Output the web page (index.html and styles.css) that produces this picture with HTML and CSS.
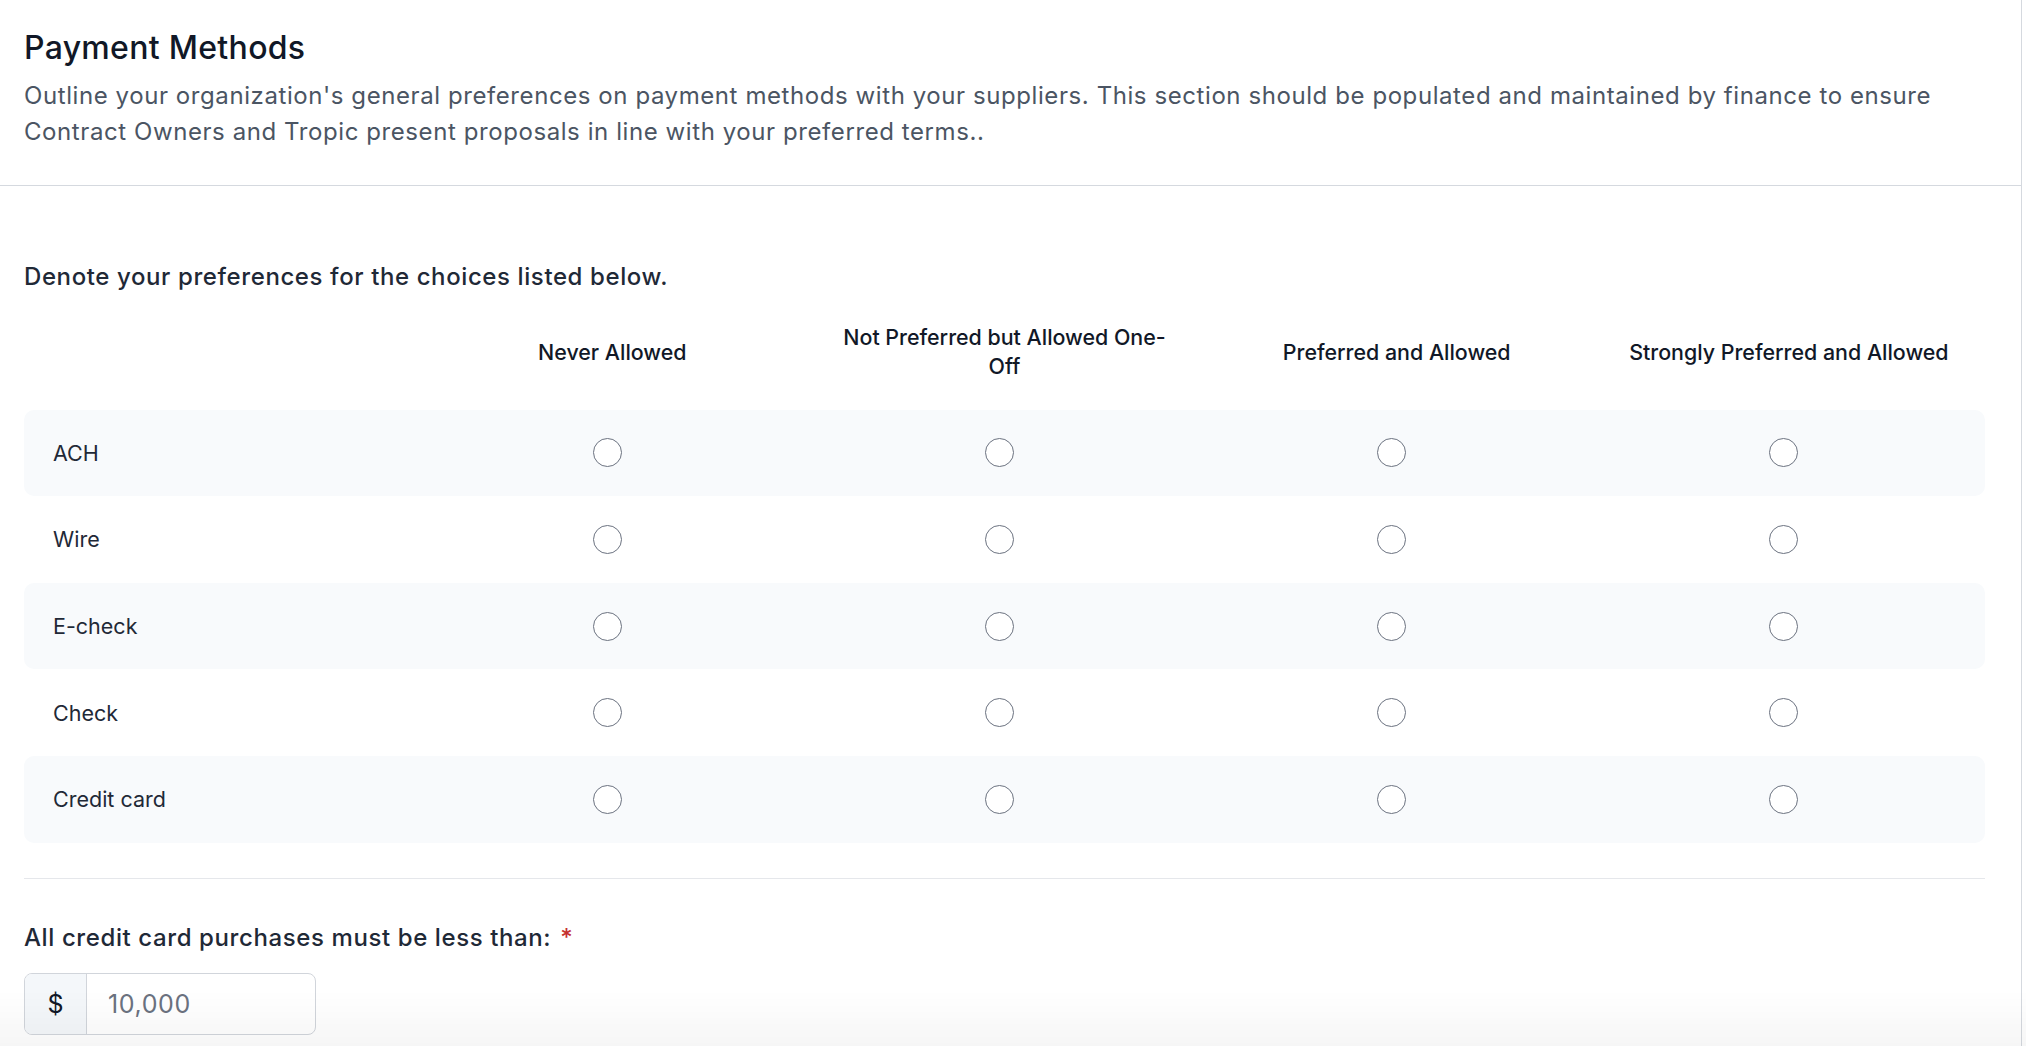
FILE: index.html
```html
<!DOCTYPE html>
<html lang="en">
<head>
<meta charset="utf-8">
<title>Payment Methods</title>
<link rel="stylesheet" href="styles.css">
</head>
<body>
<div class="panel">
  <header class="intro">
    <h1 class="title">Payment Methods</h1>
    <p class="desc">Outline your organization's general preferences on payment methods with your suppliers. This section should be populated and maintained by finance to ensure Contract Owners and Tropic present proposals in line with your preferred terms..</p>
  </header>
  <section class="content">
    <p class="prompt">Denote your preferences for the choices listed below.</p>
    <div class="matrix">
      <div class="mrow mhead">
        <div class="cell"></div>
        <div class="cell colhead">Never Allowed</div>
        <div class="cell colhead">Not Preferred but Allowed One-Off</div>
        <div class="cell colhead">Preferred and Allowed</div>
        <div class="cell colhead">Strongly Preferred and Allowed</div>
      </div>
      <div class="mrow shaded">
        <div class="cell rlabel">ACH</div>
        <div class="cell"><input class="radio" type="radio" name="ach"></div>
        <div class="cell"><input class="radio" type="radio" name="ach"></div>
        <div class="cell"><input class="radio" type="radio" name="ach"></div>
        <div class="cell"><input class="radio" type="radio" name="ach"></div>
      </div>
      <div class="mrow">
        <div class="cell rlabel">Wire</div>
        <div class="cell"><input class="radio" type="radio" name="wire"></div>
        <div class="cell"><input class="radio" type="radio" name="wire"></div>
        <div class="cell"><input class="radio" type="radio" name="wire"></div>
        <div class="cell"><input class="radio" type="radio" name="wire"></div>
      </div>
      <div class="mrow shaded">
        <div class="cell rlabel">E-check</div>
        <div class="cell"><input class="radio" type="radio" name="echeck"></div>
        <div class="cell"><input class="radio" type="radio" name="echeck"></div>
        <div class="cell"><input class="radio" type="radio" name="echeck"></div>
        <div class="cell"><input class="radio" type="radio" name="echeck"></div>
      </div>
      <div class="mrow">
        <div class="cell rlabel">Check</div>
        <div class="cell"><input class="radio" type="radio" name="check"></div>
        <div class="cell"><input class="radio" type="radio" name="check"></div>
        <div class="cell"><input class="radio" type="radio" name="check"></div>
        <div class="cell"><input class="radio" type="radio" name="check"></div>
      </div>
      <div class="mrow shaded">
        <div class="cell rlabel">Credit card</div>
        <div class="cell"><input class="radio" type="radio" name="cc"></div>
        <div class="cell"><input class="radio" type="radio" name="cc"></div>
        <div class="cell"><input class="radio" type="radio" name="cc"></div>
        <div class="cell"><input class="radio" type="radio" name="cc"></div>
      </div>
    </div>
    <hr class="divider">
    <label class="field-label" for="limit">All credit card purchases must be less than: <span class="req">*</span></label>
    <div class="money">
      <span class="prefix">$</span>
      <input id="limit" class="amount" type="text" placeholder="10,000">
    </div>
  </section>
</div>
<div class="fade"></div>
</body>
</html>
```

FILE: styles.css
```css
html, body {
  margin: 0;
  padding: 0;
  background: #ffffff;
}

body {
  font-family: Inter, "Noto Sans", "Liberation Sans", sans-serif;
  color: #1f2937;
  overflow: hidden;
}

.panel {
  width: 2022px;
  border-right: 1px solid #d5d9df;
  min-height: 1046px;
  box-sizing: border-box;
}

.intro {
  padding: 28px 40px 35px 24px;
  border-bottom: 1px solid #d5d9df;
}

.title {
  margin: 0;
  font-size: 32px;
  line-height: 40px;
  font-weight: 500;
  letter-spacing: 0.3px;
  color: #111827;
}

.desc {
  margin: 10px 0 0;
  font-size: 24px;
  line-height: 36px;
  font-weight: 400;
  letter-spacing: 0.58px;
  color: #4b5563;
}

.content {
  padding: 75px 36px 0 24px;
}

.prompt {
  margin: 0;
  font-size: 24px;
  line-height: 32px;
  font-weight: 500;
  letter-spacing: 0.6px;
  color: #1f2937;
}

.matrix {
  margin-top: 16px;
  display: flex;
  flex-direction: column;
}

.mrow {
  display: grid;
  grid-template-columns: repeat(5, 1fr);
  height: 86.6px;
  border-radius: 10px;
}

.mhead {
  margin-bottom: 14px;
}

.shaded {
  background: #f8fafc;
}

.cell {
  display: flex;
  align-items: center;
  justify-content: center;
}

.colhead {
  padding: 0 24px;
  text-align: center;
  font-size: 21.4px;
  line-height: 29px;
  font-weight: 500;
  color: #111827;
}

.rlabel {
  justify-content: flex-start;
  padding-left: 29px;
  font-size: 21.5px;
  font-weight: 400;
  color: #1f2937;
}

.radio {
  appearance: none;
  -webkit-appearance: none;
  width: 29px;
  height: 29px;
  margin: 0 10px 0 0;
  border: 1.3px solid #6b7280;
  border-radius: 50%;
  background: #ffffff;
  box-sizing: border-box;
}

.divider {
  margin: 35px 0 0;
  border: 0;
  border-top: 1.5px solid #e5e7eb;
}

.field-label {
  display: block;
  margin-top: 43px;
  font-size: 24px;
  line-height: 32px;
  font-weight: 500;
  letter-spacing: 0.6px;
  color: #1f2937;
}

.req {
  margin-left: 2px;
  color: #c53030;
}

.money {
  margin-top: 19px;
  width: 292px;
  height: 62px;
  display: flex;
  border: 1px solid #d1d5db;
  border-radius: 8px;
  box-sizing: border-box;
  overflow: hidden;
  background: #ffffff;
}

.prefix {
  width: 61px;
  flex: none;
  display: flex;
  align-items: center;
  justify-content: center;
  background: #f4f7fa;
  border-right: 1px solid #d1d5db;
  font-size: 25px;
  color: #111827;
}

.amount {
  flex: 1;
  min-width: 0;
  border: 0;
  outline: none;
  padding: 0 0 0 21px;
  font-family: Inter, "Noto Sans", "Liberation Sans", sans-serif;
  font-size: 25px;
  letter-spacing: 0.6px;
  color: #111827;
  background: transparent;
}

.amount::placeholder {
  color: #6b7280;
}

.fade {
  position: fixed;
  left: 0;
  right: 0;
  bottom: 0;
  height: 56px;
  pointer-events: none;
  background: linear-gradient(to bottom, rgba(0, 0, 0, 0), rgba(0, 0, 0, 0.035));
}
```
